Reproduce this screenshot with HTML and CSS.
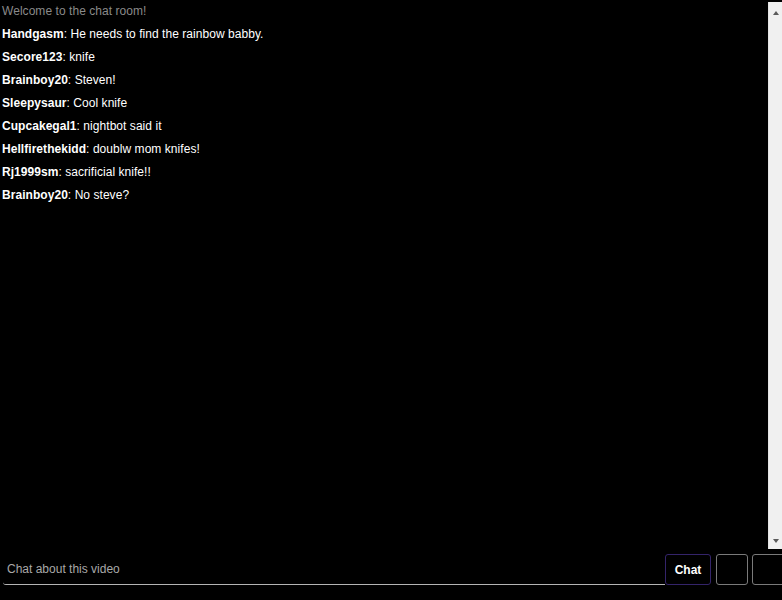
FILE: index.html
```html
<!DOCTYPE html>
<html>
<head>
<meta charset="utf-8">
<link rel="stylesheet" href="styles.css">
</head>
<body>
<div class="app">
  <div class="top">
    <div class="messages">
      <div class="msg welcome">Welcome to the chat room!</div>
      <div class="msg"><b>Handgasm</b>: He needs to find the rainbow babby.</div>
      <div class="msg"><b>Secore123</b>: knife</div>
      <div class="msg"><b>Brainboy20</b>: Steven!</div>
      <div class="msg"><b>Sleepysaur</b>: Cool knife</div>
      <div class="msg"><b>Cupcakegal1</b>: nightbot said it</div>
      <div class="msg"><b>Hellfirethekidd</b>: doublw mom knifes!</div>
      <div class="msg"><b>Rj1999sm</b>: sacrificial knife!!</div>
      <div class="msg"><b>Brainboy20</b>: No steve?</div>
    </div>
    <div class="scrollbar">
      <span class="arrow up"></span>
      <span class="arrow down"></span>
    </div>
  </div>
  <div class="bottom">
    <div class="input">Chat about this video</div>
    <button class="btn chat">Chat</button>
    <button class="btn blank"></button>
    <button class="btn blank last"></button>
  </div>
</div>
</body>
</html>
```
FILE: styles.css
```css
html, body {
  margin: 0;
  padding: 0;
  background: #000;
  width: 782px;
  height: 600px;
  overflow: hidden;
}
.app {
  display: flex;
  flex-direction: column;
  height: 600px;
  font-family: "Liberation Sans", Arial, sans-serif;
  font-size: 12px;
  color: #fff;
}
.top {
  display: flex;
  height: 550px;
}
.messages {
  flex: 1;
  padding: 3px 0 0 2px;
}
.msg {
  height: 23px;
  line-height: 16px;
  letter-spacing: 0.05px;
}
.msg b {
  font-weight: bold;
}
.welcome {
  color: #8a8a8a;
}
.scrollbar {
  flex-shrink: 0;
  width: 14px;
  margin-top: 2px;
  height: 547px;
  background: #f0f0f0;
  border-left: 1px solid #e4e4e4;
  display: flex;
  flex-direction: column;
  justify-content: space-between;
  align-items: center;
  padding: 9px 0 6px;
  box-sizing: border-box;
}
.arrow {
  width: 0;
  height: 0;
  border-left: 3px solid transparent;
  border-right: 3px solid transparent;
}
.arrow.up {
  border-bottom: 4px solid #5a5a5a;
}
.arrow.down {
  border-top: 4px solid #5a5a5a;
}
.bottom {
  display: flex;
  align-items: flex-start;
  padding-top: 4px;
}
.input {
  flex-shrink: 0;
  width: 662px;
  margin-left: 3px;
  height: 31px;
  box-sizing: border-box;
  border-bottom: 1px solid #b4b4b4;
  border-bottom-left-radius: 3px;
  color: #a8a8a8;
  font-size: 12px;
  line-height: 30px;
  padding-left: 4px;
}
.btn {
  flex-shrink: 0;
  height: 31px;
  box-sizing: border-box;
  background: #000;
  border: 1px solid #7a7a7a;
  border-radius: 3px;
  padding: 0;
  margin: 0;
  font-family: "Liberation Sans", Arial, sans-serif;
}
.chat {
  width: 46px;
  border-color: #34246a;
  color: #fff;
  font-weight: bold;
  font-size: 12px;
}
.blank {
  width: 32px;
  margin-left: 5px;
}
.blank.last {
  width: 34px;
  margin-left: 4px;
}
```
